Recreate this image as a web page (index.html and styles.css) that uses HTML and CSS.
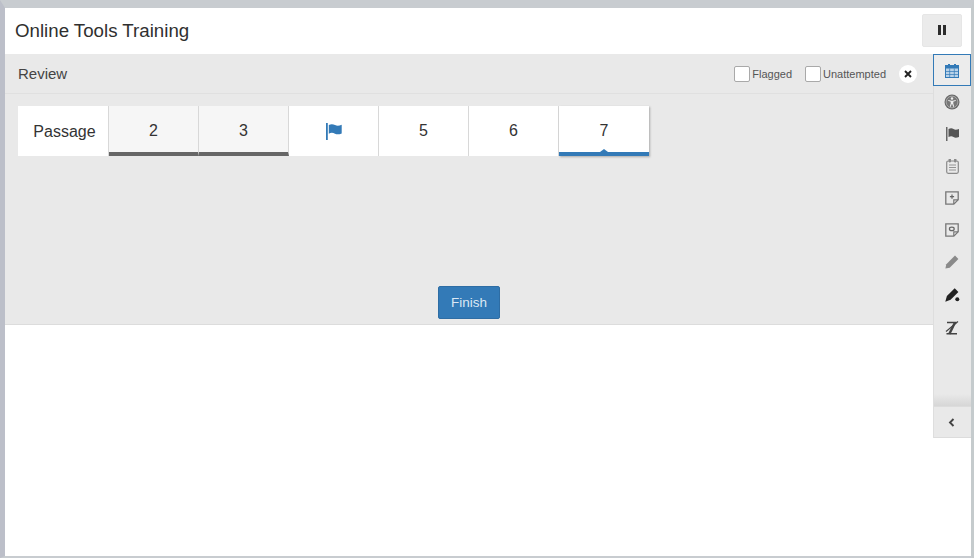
FILE: index.html
```html
<!DOCTYPE html>
<html lang="en">
<head>
<meta charset="utf-8">
<title>Online Tools Training</title>
<link rel="stylesheet" href="styles.css">
</head>
<body>
<div class="frame">
  <header class="top">
    <h1 class="title">Online Tools Training</h1>
    <button class="pause" aria-label="Pause"><span class="bar"></span><span class="bar"></span></button>
  </header>
  <main class="main">
    <section class="panel">
      <div class="review-bar">
        <span class="review-title">Review</span>
        <div class="filters">
          <label class="filter"><span class="box"></span>Flagged</label>
          <label class="filter"><span class="box"></span>Unattempted</label>
          <span class="close"><svg width="8" height="8" viewBox="0 0 8 8"><path d="M1 1l6 6M7 1L1 7" stroke="#222" stroke-width="1.900"/></svg></span>
        </div>
      </div>
      <div class="tabs">
        <div class="tab label">Passage</div>
        <div class="tab seen">2</div>
        <div class="tab seen">3</div>
        <div class="tab flag"><svg width="17" height="17" viewBox="0 0 17 17"><path d="M0 0h1.800v17H0z" fill="#337ab7"/><path d="M2.800 2c2.200-1.200 4.200-1 6.200 0s4 .8 6.700-.2V10.500c-2.700 1-4.700 1.200-6.700 .2s-4-1.200-6.200 0z" fill="#337ab7"/></svg></div>
        <div class="tab">5</div>
        <div class="tab">6</div>
        <div class="tab current">7</div>
      </div>
      <div class="actions"><button class="finish">Finish</button></div>
    </section>
    <aside class="rail">
      <div class="tool active"><svg width="14" height="14" viewBox="0 0 14 14"><path d="M3 0h2v2H3zM9 0h2v2H9z" fill="#337ab7"/><rect x=".5" y="1.500" width="13" height="12" fill="#b9d2e8" stroke="#337ab7"/><path d="M0 2h14v2.500H0z" fill="#337ab7"/><path d="M4.700 4.500v9M9.300 4.500v9M0 7.500h14M0 10.500h14" stroke="#337ab7" stroke-width=".7"/></svg></div>
      <div class="tool"><svg width="16" height="16" viewBox="0 0 16 16"><circle cx="8" cy="8" r="7.500" fill="#686868"/><circle cx="8" cy="8" r="5.900" fill="#777" stroke="#ccc" stroke-width=".6"/><circle cx="8" cy="4.500" r="1.200" fill="#eee"/><path d="M4.300 5.900l3 .8h1.400l3-.8.200.8-2.600 1V9.500l.9 3.100-.9.300L8.200 10h-.4l-1.100 2.900-.9-.3.900-3.100V7.700l-2.600-1z" fill="#eee"/></svg></div>
      <div class="tool"><svg width="13" height="14" viewBox="0 0 13 14"><path d="M0 0h1.500v14H0z" fill="#666"/><path d="M2.500 2c2-1 3.500-1 5 0s3 .8 5.500 0v8c-2.500 .8-4 1-5.500 0s-3-1-5 0z" fill="#555"/></svg></div>
      <div class="tool"><svg width="13" height="15" viewBox="0 0 13 15"><rect x=".7" y="2" width="11.600" height="12.300" rx="1.500" fill="none" stroke="#8a8a8a" stroke-width="1.200"/><path d="M3 0h1.500v3H3zM8.500 0H10v3H8.500zM3 6h7M3 8.500h7M3 11h7" fill="#8a8a8a" stroke="#8a8a8a" stroke-width=".9"/></svg></div>
      <div class="tool"><svg width="14" height="14" viewBox="0 0 14 14"><path d="M.8 .8h12.400v8l-4.400 4.400H.8z" fill="none" stroke="#777" stroke-width="1.300"/><path d="M8.800 13V8.800H13" fill="none" stroke="#777" stroke-width="1.200"/><path d="M7 3.500v4.200M4.900 5.600h4.200" stroke="#666" stroke-width="1.200"/></svg></div>
      <div class="tool"><svg width="14" height="14" viewBox="0 0 14 14"><path d="M.8 .8h12.400v8l-4.400 4.400H.8z" fill="none" stroke="#777" stroke-width="1.300"/><path d="M8.800 13V8.800H13" fill="none" stroke="#777" stroke-width="1.200"/><ellipse cx="6.800" cy="5.900" rx="2.400" ry="1.700" fill="none" stroke="#666" stroke-width="1.200"/></svg></div>
      <div class="tool"><svg width="14" height="14" viewBox="0 0 14 14"><path d="M10 .6l3.400 3.400-8.700 8.700L.4 13.600l.9-4.300z" fill="#8a8a8a"/></svg></div>
      <div class="tool low"><svg width="15" height="14" viewBox="0 0 15 14"><path d="M9.700 .3l3.700 3.700-7.800 7.800L.3 13.700l1.600-5.600z" fill="#222"/><circle cx="12.300" cy="11.300" r="2" fill="#222"/></svg></div>
      <div class="tool lower"><svg width="14" height="14" viewBox="0 0 14 14"><path d="M2 1.500h9.500M1.500 12.800h10.500" stroke="#444" stroke-width="1.400"/><path d="M10 1.500L4.300 13" stroke="#444" stroke-width="2.400"/><path d="M1 10.500L13 .5" stroke="#444" stroke-width="1.100"/></svg></div>
      <div class="rail-space"></div>
      <div class="rail-shade"></div>
      <div class="collapse"><svg width="7" height="9" viewBox="0 0 7 9"><path d="M5.500 1L2 4.500 5.500 8" fill="none" stroke="#444" stroke-width="1.900"/></svg></div>
    </aside>
  </main>
</div>
</body>
</html>
```
FILE: styles.css
```css
* { box-sizing: border-box; }
html, body { margin: 0; height: 100%; background: #fff; }
body { font-family: "Liberation Sans", Arial, sans-serif; color: #333; }
.frame {
  width: 974px; height: 558px;
  border-style: solid; border-color: #c8ccd0 #c5cbcd #c8ccd0 #bcbfc9;
  border-width: 8px 3px 2px 5px;
  display: flex; flex-direction: column;
}
.top {
  height: 46px; background: #fff;
  display: flex; align-items: center; justify-content: space-between;
  padding: 0 9px 1px 10px;
}
.title { margin: 0; font-size: 18.700px; font-weight: 400; color: #2f2f2f; }
.pause {
  width: 40px; height: 33px; padding: 0; margin-top: -1px;
  background: #ebebeb; border: 1px solid #e6e6e6; border-radius: 2px;
  display: flex; align-items: center; justify-content: center; gap: 2px;
}
.bar { width: 3px; height: 10px; background: #2c2c2c; }
.main { position: relative; flex: 1; }
.panel { height: 271px; background: #e9e9e9; border-bottom: 1px solid #dcdcdc; display: flex; flex-direction: column; }
.review-bar {
  height: 40px; border-bottom: 1px solid #e0e0e0;
  display: flex; align-items: center; justify-content: space-between;
  padding: 0 54px 0 13px;
}
.review-title { font-size: 15px; color: #444; }
.filters { display: flex; align-items: center; }
.filter { display: flex; align-items: center; font-size: 11px; color: #555; margin-right: 13px; }
.box { width: 16px; height: 16px; background: #fff; border: 1px solid #a9a9a9; border-radius: 2px; margin-right: 2px; }
.close { width: 18px; height: 18px; border-radius: 50%; background: #fff; display: flex; align-items: center; justify-content: center; }
.tabs { display: flex; margin: 12px 0 0 13px; }
.tab {
  width: 90px; height: 50px; background: #fff;
  border-right: 1px solid #d8d8d8;
  display: flex; align-items: center; justify-content: center;
  font-size: 16px; color: #333; position: relative;
}
.label { width: 91px; padding: 1px 0 0 3px; }
.flag { padding-left: 2px; }
.seen { background: #f6f6f6; border-bottom: 4px solid #666; padding-top: 4px; }
.current { border-bottom: 4px solid #337ab7; padding-top: 4px; box-shadow: 1px 1px 2px #aaa; border-right: 0; }
.current::after {
  content: ""; position: absolute; left: 41px; bottom: 0;
  border: 4px solid transparent; border-top: 0; border-bottom: 3px solid #337ab7;
}
.actions { display: flex; justify-content: center; margin-top: 130px; padding-right: 38px; }
.finish {
  width: 62px; height: 33px; padding: 0 0 1px; background: #337ab7; color: #dbe8f4;
  border: 1px solid #2e6da4; border-radius: 2px;
  font: 13.500px "Liberation Sans", Arial, sans-serif;
}
.rail {
  position: absolute; top: 0; right: 0; width: 38px; height: 384px;
  background: #e9e9e9; border-left: 1px solid #dedede;
  display: flex; flex-direction: column;
}
.tool { height: 32px; flex: none; display: flex; align-items: center; justify-content: center; padding-right: 1px; }
.active { border: 1px solid #337ab7; margin-left: -1px; background: #ececec; padding-top: 1px; }
.low { padding-top: 2px; }
.lower { padding-top: 4px; }
.rail-space { flex: 1; }
.rail-shade { height: 12px; background: linear-gradient(#e9e9e9, #d6d6d6); }
.collapse { height: 32px; border-top: 1px solid #dcdcdc; border-bottom: 1px solid #dcdcdc; display: flex; align-items: center; justify-content: center; padding-right: 2px; }
```
